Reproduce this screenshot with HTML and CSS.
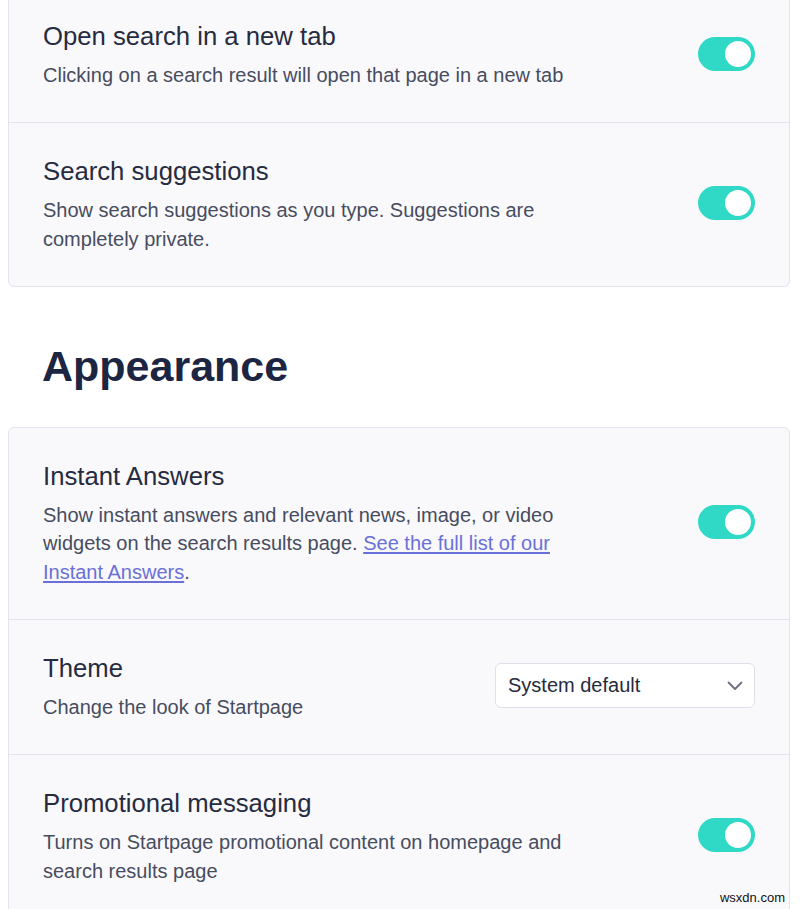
FILE: index.html
```html
<!DOCTYPE html>
<html lang="en">
<head>
<meta charset="utf-8">
<title>Settings</title>
<link rel="stylesheet" href="styles.css">
</head>
<body>
<main class="page">
  <section class="card card-first">
    <div class="row">
      <div class="text">
        <h3 class="title">Open search in a new tab</h3>
        <p class="desc">Clicking on a search result will open that page in a new tab</p>
      </div>
      <span class="toggle"><span class="knob"></span></span>
    </div>
    <div class="row">
      <div class="text">
        <h3 class="title">Search suggestions</h3>
        <p class="desc">Show search suggestions as you type. Suggestions are completely private.</p>
      </div>
      <span class="toggle"><span class="knob"></span></span>
    </div>
  </section>

  <h2 class="section-heading">Appearance</h2>

  <section class="card">
    <div class="row">
      <div class="text">
        <h3 class="title">Instant Answers</h3>
        <p class="desc">Show instant answers and relevant news, image, or video widgets on the search results page. <a href="#">See the full list of our Instant Answers</a>.</p>
      </div>
      <span class="toggle"><span class="knob"></span></span>
    </div>
    <div class="row">
      <div class="text">
        <h3 class="title">Theme</h3>
        <p class="desc">Change the look of Startpage</p>
      </div>
      <div class="select">
        <span>System default</span>
        <svg class="chev" width="16" height="10" viewBox="0 0 16 10"><path d="M1.5 1.5 L8 8 L14.5 1.5" fill="none" stroke="#6b6f7e" stroke-width="1.8" stroke-linecap="round" stroke-linejoin="round"/></svg>
      </div>
    </div>
    <div class="row">
      <div class="text">
        <h3 class="title">Promotional messaging</h3>
        <p class="desc">Turns on Startpage promotional content on homepage and search results page</p>
      </div>
      <span class="toggle"><span class="knob"></span></span>
    </div>
  </section>
</main>
<div class="watermark">wsxdn.com</div>
</body>
</html>
```

FILE: styles.css
```css
html, body {
  margin: 0;
  padding: 0;
  background: #ffffff;
}
body {
  font-family: "Liberation Sans", Arial, sans-serif;
  color: #2a2f45;
  position: relative;
  height: 909px;
  overflow: hidden;
}
.page {
  width: 782px;
  padding-left: 8px;
}
.card {
  background: #f9f9fc;
  border: 1px solid #e3e4ee;
  border-radius: 6px;
}
.card-first {
  margin-top: -13px;
}
.row {
  display: flex;
  align-items: center;
  justify-content: space-between;
  padding: 30px 34px 32.5px 34px;
  border-top: 1px solid #e3e4ee;
}
.row:first-child {
  border-top: none;
}
.text {
  width: 560px;
}
.title {
  margin: 0 0 7px 0;
  font-size: 25.7px;
  line-height: 36px;
  font-weight: 400;
  color: #262b40;
}
.desc {
  margin: 0;
  font-size: 20px;
  line-height: 28.6px;
  color: #474c5e;
}
.desc a {
  color: #6a70d8;
  text-decoration: underline;
  text-underline-offset: 2px;
}
.toggle {
  flex: none;
  width: 57px;
  height: 34px;
  border-radius: 17px;
  background: #2fd9c5;
  display: flex;
  align-items: center;
  justify-content: flex-end;
  padding: 0 4px;
  box-sizing: border-box;
}
.knob {
  width: 26px;
  height: 26px;
  border-radius: 50%;
  background: #ffffff;
}
.select {
  flex: none;
  width: 260px;
  height: 45px;
  box-sizing: border-box;
  background: #ffffff;
  border: 1px solid #dfe0ea;
  border-radius: 6px;
  display: flex;
  align-items: center;
  justify-content: space-between;
  padding: 0 11px 0 12px;
  font-size: 20px;
  color: #262b40;
}
.chev {
  display: block;
}
.section-heading {
  margin: 53px 0 35px 34px;
  font-size: 43px;
  line-height: 52px;
  font-weight: 700;
  color: #1c2542;
}
.watermark {
  position: absolute;
  right: 15px;
  bottom: 4px;
  font-size: 13px;
  color: #111111;
  font-family: "Liberation Sans", Arial, sans-serif;
}
```
